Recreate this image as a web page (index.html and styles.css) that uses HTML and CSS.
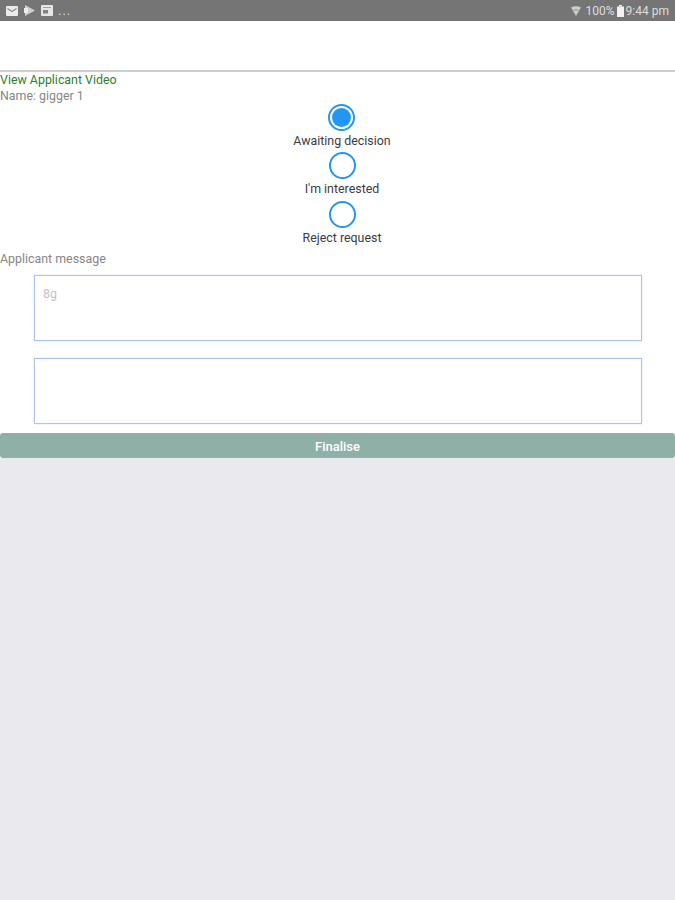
FILE: index.html

```html
<!DOCTYPE html>
<html lang="en">
<head>
  <meta charset="UTF-8" />
  <meta name="viewport" content="width=device-width, initial-scale=1.0" />
  <title>Applicant</title>
  <link rel="stylesheet" href="styles.css">
</head>
<body>
  <div class="status-bar">
    <div class="status-left">
      <svg class="icon" width="12" height="10" viewBox="0 0 12 10"><rect x="0" y="0" width="12" height="10" rx="1" fill="#ececec"/><path d="M1.500 2.500l4.500 3 4.500-3" fill="none" stroke="#8a8a8a" stroke-width="1.200"/></svg>
      <svg class="icon" width="11" height="11" viewBox="0 0 11 11"><path d="M1 0l10 5.500-10 5.500z" fill="#cfcfcf"/><rect x="0" y="3" width="4" height="5" fill="#ececec"/></svg>
      <svg class="icon" width="12" height="11" viewBox="0 0 12 11"><rect x="0" y="0" width="12" height="11" rx="1" fill="#e6e6e6"/><rect x="2" y="5" width="5" height="3.500" fill="#808080"/><rect x="2" y="2" width="8" height="1" fill="#a0a0a0"/></svg>
      <span class="dots">...</span>
    </div>
    <div class="status-right">
      <svg class="wifi" width="10" height="10" viewBox="0 0 10 10"><path d="M0 1.500Q5-1 10 1.500L5 10z" fill="#cccccc"/><path d="M2.500 4.500Q5 3 7.500 4.500" fill="none" stroke="#808080" stroke-width="0.800"/></svg>
      <span class="pct">100%</span>
      <svg class="battery" width="7" height="12" viewBox="0 0 7 12"><rect x="2" y="0" width="3" height="1.500" fill="#f2f2f2"/><rect x="0" y="1.500" width="7" height="10.500" fill="#f2f2f2"/></svg>
      <span>9:44 pm</span>
    </div>
  </div>

  <div class="top-bar"></div>

  <div class="content">
    <a class="video-link" href="#">View Applicant Video</a>
    <div class="line-text">Name: gigger 1</div>

    <div class="options">
      <div class="option">
        <span class="radio radio-on"></span>
        <span class="option-label">Awaiting decision</span>
      </div>
      <div class="option">
        <span class="radio"></span>
        <span class="option-label">I'm interested</span>
      </div>
      <div class="option">
        <span class="radio"></span>
        <span class="option-label">Reject request</span>
      </div>
    </div>

    <div class="line-text message-title">Applicant message</div>
    <div class="text-box box-first">8g</div>
    <div class="text-box"></div>

    <button class="finalise">Finalise</button>
  </div>
</body>
</html>
```

FILE: styles.css

```css
body { margin: 0; background: #e9e9ee; font-family: Roboto, "Liberation Sans", sans-serif; font-size: 12.4px; }
.status-bar { height: 21px; background: #757575; color: #dedede; display: flex; justify-content: space-between; align-items: center; padding: 0 6px; font-size: 12px; }
.status-left { display: flex; align-items: center; gap: 6px; }
.dots { font-size: 13px; line-height: 12px; letter-spacing: 1px; margin-left: -1px; }
.status-right { display: flex; align-items: center; gap: 2px; }
.wifi { margin-right: 3px; }
.top-bar { height: 49px; background: #fff; border-bottom: 2px solid #cfcfcf; }
.content { background: #fff; }
.video-link { display: block; color: #2e7d32; text-decoration: none; line-height: 16px; }
.line-text { color: #868686; line-height: 16px; }
.options { display: flex; flex-direction: column; align-items: center; margin-left: 9px; }
.option { display: flex; flex-direction: column; align-items: center; height: 48.300px; }
.radio { width: 27px; height: 27px; border: 2px solid #2196f3; border-radius: 50%; box-sizing: border-box; background: #fff; padding: 2px; background-clip: content-box; }
.radio-on { background-color: #2196f3; }
.option-label { color: #3c3c3c; line-height: 16px; margin-top: 2px; }
.message-title { margin-top: 2px; }
.text-box { width: 608px; height: 66px; box-sizing: border-box; border: 1px solid #a9c4f5; box-shadow: 0 0 1px #a9c4f5; margin-left: 34px; padding: 10px 8px; color: #c4c4c4; background: #fff; }
.box-first { margin-top: 8px; }
.text-box + .text-box { margin-top: 17px; }
.finalise { display: block; width: 100%; height: 25px; margin-top: 9px; border: none; border-radius: 3px; background: #8fb0a6; color: #fff; font-family: inherit; font-size: 13px; font-weight: 500; padding: 2px 0 0; }
```
